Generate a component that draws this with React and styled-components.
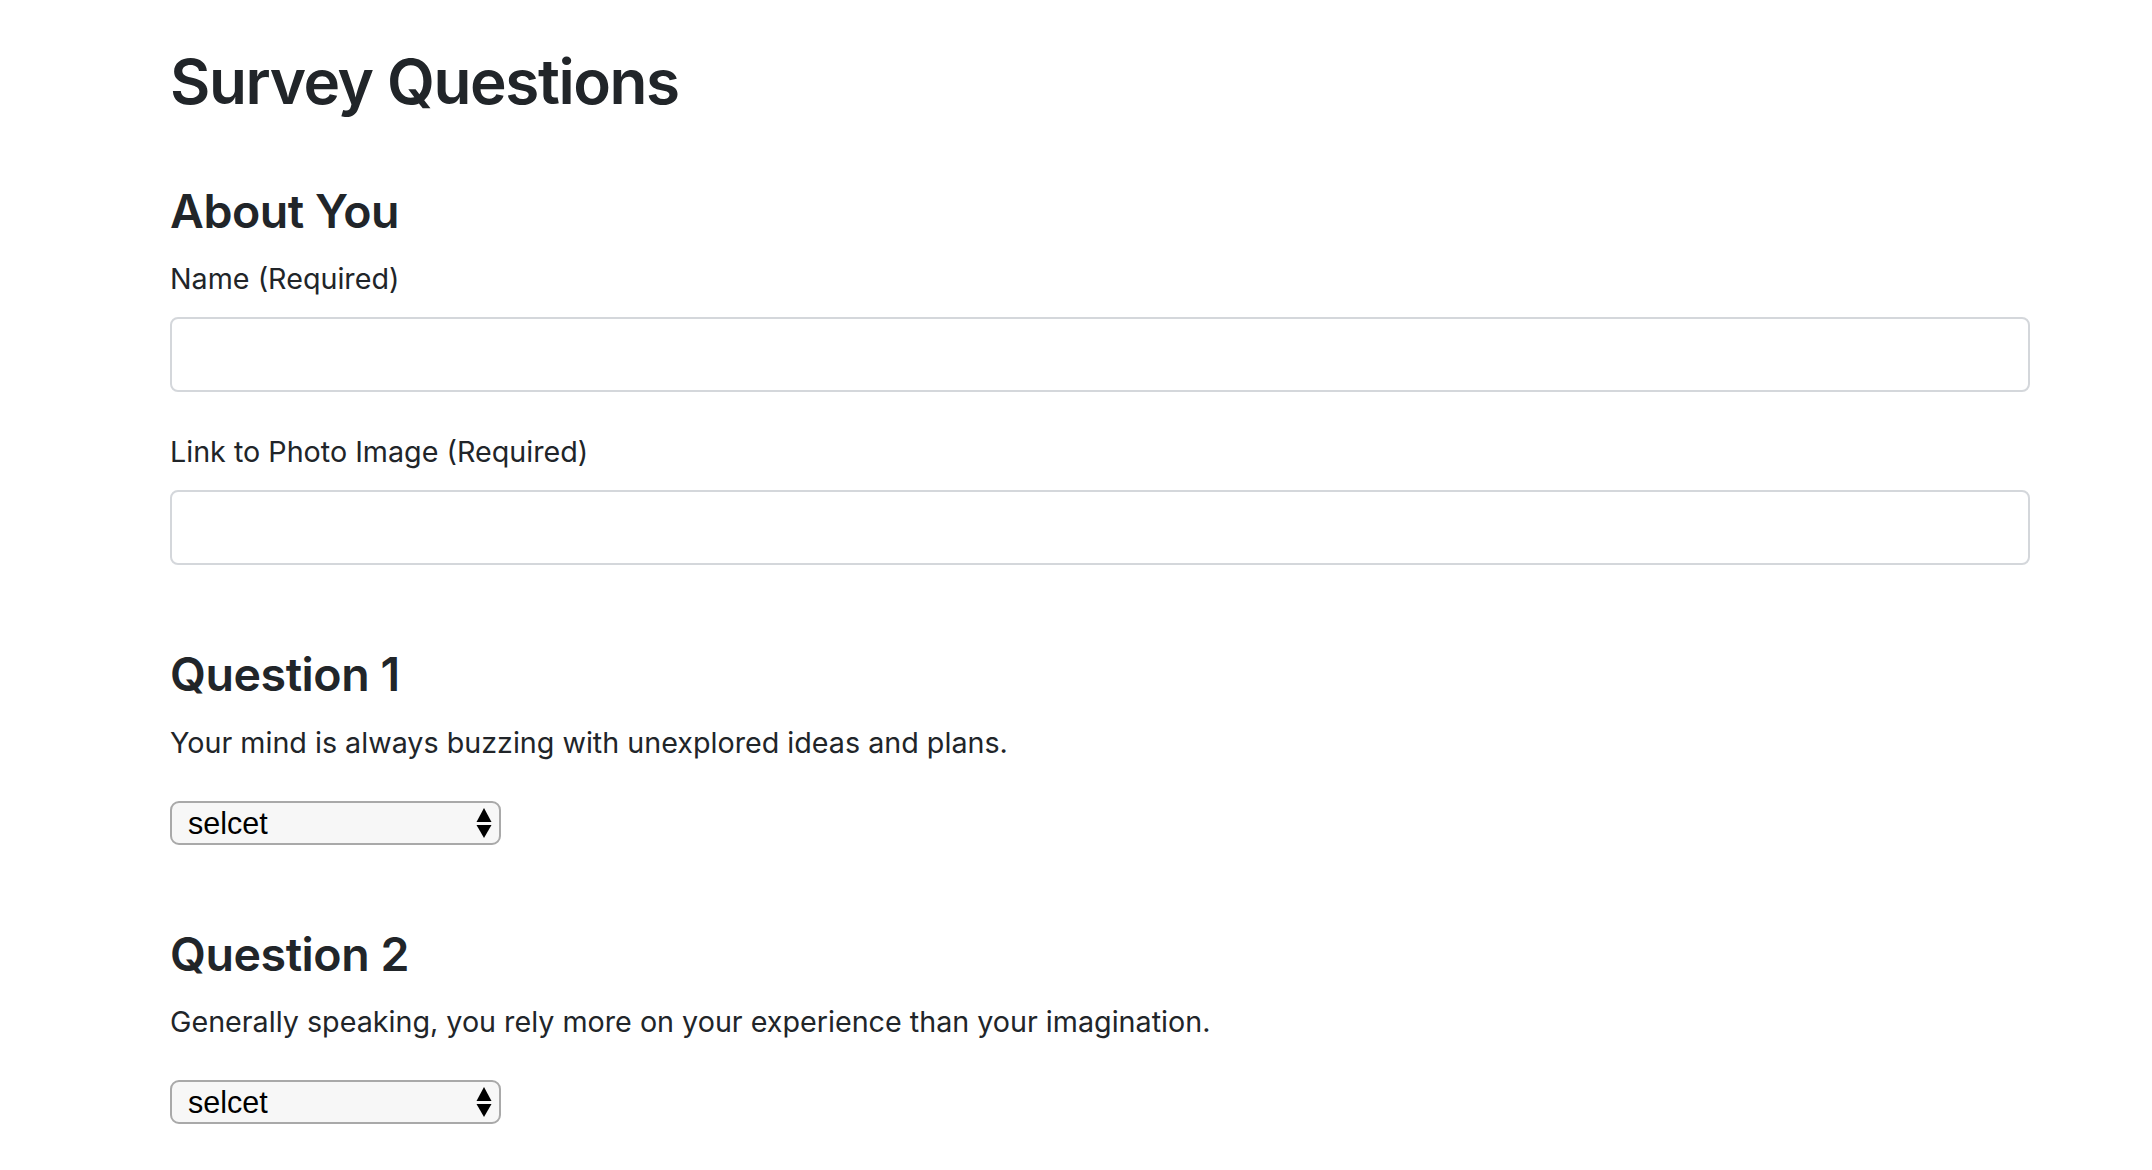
import styled, { createGlobalStyle } from 'styled-components'

// Survey form page: a title, an "About You" block and a list of questions
const GlobalStyle = createGlobalStyle`
  body {
    margin: 0;
    background: #ffffff;
    color: #212529;
    font-family: Inter, "Noto Sans", sans-serif;
  }
`

const Page = styled.main`
  padding: 45px 122px 60px 170px;
`

const Title = styled.h1`
  margin: 0;
  font-size: 62px;
  font-weight: 600;
  line-height: 1.2;
  letter-spacing: -1.4px;
`

const Section = styled.section`
  margin-top: ${(p) => p.$gap}px;
`

const Heading = styled.h3`
  margin: 0 0 17.5px;
  font-size: 46.5px;
  font-weight: 600;
  line-height: 1.2;
  letter-spacing: -0.45px;
`

const Field = styled.div`
  & + & {
    margin-top: 38.5px;
  }
`

const Label = styled.label`
  display: block;
  margin-bottom: 16.5px;
  font-size: 28.7px;
  line-height: 1.5;
`

const TextInput = styled.input`
  display: block;
  box-sizing: border-box;
  width: 100%;
  height: 75px;
  padding: 10px 20px;
  border: 2px solid #d4d7db;
  border-radius: 8px;
  background: #fff;
  font: inherit;
  font-size: 26px;
  color: #495057;
`

const Prompt = styled.p`
  margin: 0 0 37px;
  font-size: 28.7px;
  line-height: 1.5;
`

const SelectWrap = styled.div`
  position: relative;
  width: 331px;
  height: 44px;
`

const Select = styled.select`
  appearance: none;
  box-sizing: border-box;
  width: 100%;
  height: 100%;
  padding: 0 40px 0 16px;
  border: 2px solid #a9a9a9;
  border-radius: 9px;
  background: #f7f7f7;
  color: #000;
  font-family: "Liberation Sans", Arial, sans-serif;
  font-size: 30.5px;
`

const Arrows = styled.svg`
  position: absolute;
  top: 7px;
  right: 9px;
  pointer-events: none;
`

const questions = [
  'Your mind is always buzzing with unexplored ideas and plans.',
  'Generally speaking, you rely more on your experience than your imagination.',
]

const Choice = () => (
  <SelectWrap>
    <Select defaultValue=''>
      <option value=''>selcet</option>
      <option value='1'>1 (Strongly Disagree)</option>
      <option value='2'>2</option>
      <option value='3'>3</option>
      <option value='4'>4</option>
      <option value='5'>5 (Strongly Agree)</option>
    </Select>
    <Arrows width='16' height='30' viewBox='0 0 16 30'>
      <polygon points='8,0 15.5,14 0.5,14' fill='#000' />
      <polygon points='0.5,17 15.5,17 8,30' fill='#000' />
    </Arrows>
  </SelectWrap>
)

const App = () => {
  return (
    <>
      <GlobalStyle />
      <Page>
        <Title>Survey Questions</Title>

        <Section $gap={64.5}>
          <Heading>About You</Heading>
          <Field>
            <Label htmlFor='name'>Name (Required)</Label>
            <TextInput id='name' type='text' />
          </Field>
          <Field>
            <Label htmlFor='photo'>Link to Photo Image (Required)</Label>
            <TextInput id='photo' type='text' />
          </Field>
        </Section>

        {questions.map((q, i) => (
          <Section key={i} $gap={82.5}>
            <Heading>Question {i + 1}</Heading>
            <Prompt>{q}</Prompt>
            <Choice />
          </Section>
        ))}
      </Page>
    </>
  )
}

export default App
